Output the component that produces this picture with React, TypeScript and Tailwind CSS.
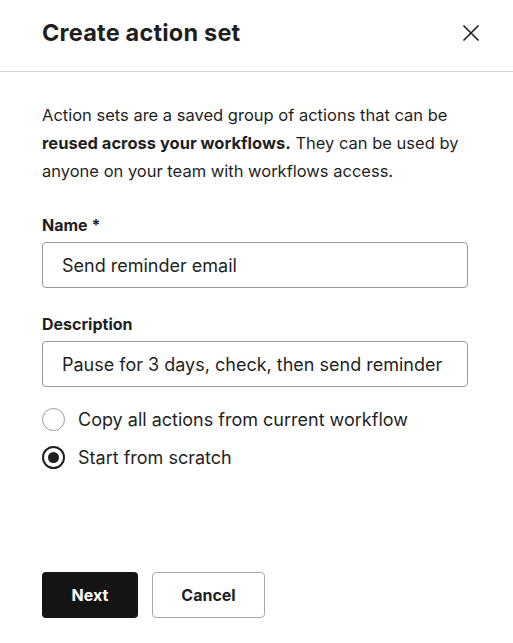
export default function App() {
  return (
    <div className="w-[513px] h-[643px] bg-white flex flex-col overflow-hidden text-[#1f1f1f]" style={{ fontFamily: "Inter, 'Noto Sans', sans-serif" }}>
      <div className="h-[72px] flex items-center justify-between pl-[42px] pr-[30px] pb-[6px] border-b border-[#d6d6d6]">
        <h1 className="text-[23.5px] font-bold tracking-[0.2px]">Create action set</h1>
        <button className="w-6 h-6 flex items-center justify-center">
          <svg width="18" height="18" viewBox="0 0 18 18" fill="none" stroke="#1f1f1f" strokeWidth="1.6">
            <path d="M1.5 1.5 L16.5 16.5 M16.5 1.5 L1.5 16.5" />
          </svg>
        </button>
      </div>
      <div className="flex-1 flex flex-col px-[42px] pt-[29px]">
        <p className="text-[16.5px] leading-[28px] w-[420px]">
          Action sets are a saved group of actions that can be <strong className="font-bold">reused across your workflows.</strong> They can be used by anyone on your team with workflows access.
        </p>
        <label className="mt-[30px] text-[16px] font-bold leading-[20px]">Name *</label>
        <div className="mt-[7px] h-[46px] w-[426px] border border-[#999] rounded-[4px] flex items-center px-[19px] text-[18px]">
          Send reminder email
        </div>
        <label className="mt-[26px] text-[16px] font-bold leading-[20px]">Description</label>
        <div className="mt-[7px] h-[46px] w-[426px] border border-[#999] rounded-[4px] flex items-center px-[19px] text-[18px] whitespace-nowrap overflow-hidden">
          Pause for 3 days, check, then send reminder
        </div>
        <div className="mt-[21px] flex flex-col gap-[15px]">
          <div className="flex items-center gap-[13px]">
            <span className="w-[23px] h-[23px] rounded-full border border-[#999] bg-white" />
            <span className="text-[18px] leading-[22px]">Copy all actions from current workflow</span>
          </div>
          <div className="flex items-center gap-[13px]">
            <span className="w-[23px] h-[23px] rounded-full border-2 border-[#1f1f1f] flex items-center justify-center">
              <span className="w-[11px] h-[11px] rounded-full bg-[#1f1f1f]" />
            </span>
            <span className="text-[18px] leading-[22px]">Start from scratch</span>
          </div>
        </div>
        <div className="mt-auto mb-[25px] flex gap-[14px]">
          <button className="h-[46px] w-[96px] rounded-[4px] bg-[#141414] text-white text-[16px] font-bold">Next</button>
          <button className="h-[46px] w-[113px] rounded-[4px] border border-[#a8a8a8] bg-white text-[16px] font-bold">Cancel</button>
        </div>
      </div>
    </div>
  );
}
